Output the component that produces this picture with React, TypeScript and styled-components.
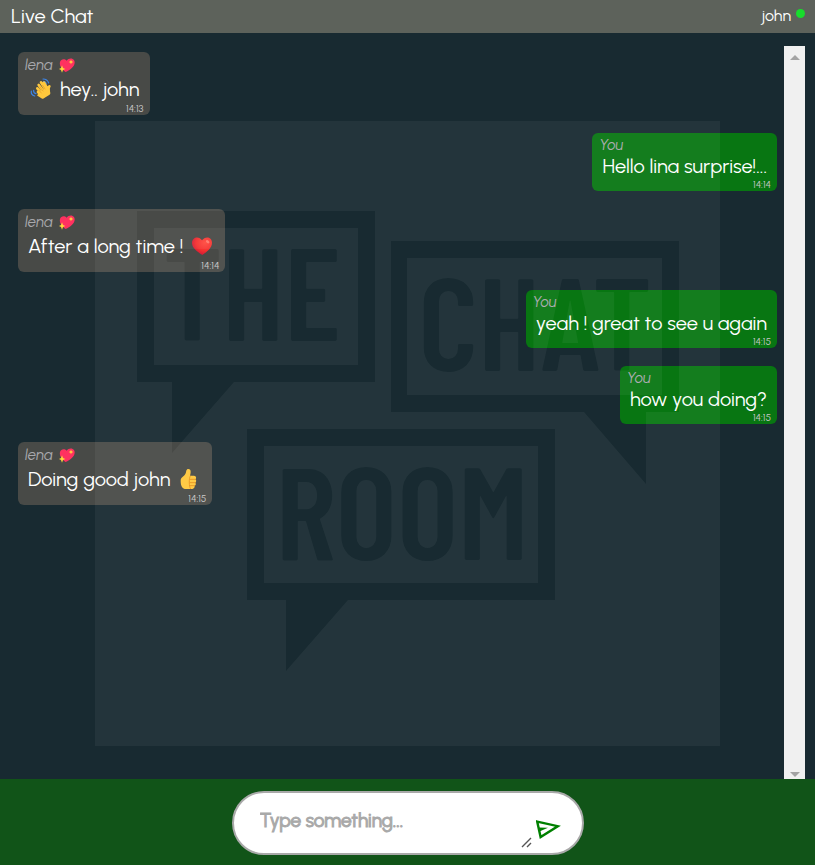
import React from "react";
import styled, { createGlobalStyle } from "styled-components";

const GlobalStyle = createGlobalStyle`
  *, *::before, *::after { box-sizing: border-box; }
  body {
    margin: 0;
    background: #182a31;
    color: #fff;
    font-family: Urbanist, Lato, "Liberation Sans", sans-serif;
  }
  button, textarea { font: inherit; }
`;

const Page = styled.div`
  position: relative;
  display: flex;
  flex-direction: column;
  height: 100vh;
  overflow: hidden;
`;

const Header = styled.header`
  display: flex;
  align-items: flex-start;
  justify-content: space-between;
  flex: none;
  padding: 4px 10px 5px 11px;
  background: #5d625b;
`;

const Title = styled.h1`
  margin: 0;
  font-size: 20px;
  line-height: 24px;
  font-weight: 400;
`;

const User = styled.div`
  display: flex;
  align-items: flex-start;
  gap: 5px;
  font-size: 16px;
  line-height: 24px;
`;

const OnlineDot = styled.span`
  width: 9px;
  height: 9px;
  margin-top: 5px;
  border-radius: 50%;
  background: #18dc2c;
`;

const Body = styled.main`
  display: flex;
  flex: 1;
  min-height: 0;
  padding: 13px 10px 0 0;
`;

const MessageList = styled.ol`
  display: flex;
  flex: 1;
  flex-direction: column;
  gap: 18px;
  margin: 0;
  padding: 6px 7px 6px 18px;
  list-style: none;
  overflow-y: auto;
  scrollbar-width: none;
`;

const Bubble = styled.li<{ $own: boolean }>`
  display: flex;
  flex: none;
  flex-direction: column;
  align-self: ${(p) => (p.$own ? "flex-end" : "flex-start")};
  max-width: 80%;
  padding: 3px 6px 1px 7px;
  border-radius: 6px;
  background: ${(p) => (p.$own ? "#087612" : "#484a47")};
`;

const Sender = styled.span<{ $own: boolean }>`
  display: flex;
  align-items: center;
  gap: 6px;
  color: #a9a9ad;
  font-size: 15px;
  line-height: ${(p) => (p.$own ? "18px" : "20px")};
  font-style: italic;
`;

const Text = styled.p<{ $own: boolean }>`
  display: flex;
  align-items: center;
  gap: 8px;
  margin: 0;
  padding: 0 4px 0 3px;
  font-size: 20px;
  line-height: ${(p) => (p.$own ? "25px" : "28px")};
`;

const Time = styled.time`
  align-self: flex-end;
  color: #c8c8c8;
  font-size: 10px;
  line-height: 11px;
`;

const ScrollTrack = styled.div`
  display: flex;
  flex: none;
  flex-direction: column;
  align-items: center;
  justify-content: space-between;
  width: 21px;
  padding: 9px 0 2px;
  background: #f0f0f0;
`;

const Watermark = styled.div`
  position: absolute;
  inset: 0;
  display: flex;
  align-items: center;
  justify-content: center;
  padding-top: 1px;
  pointer-events: none;
`;

const Footer = styled.footer`
  display: flex;
  flex: none;
  justify-content: center;
  padding: 12px 0 10px;
  background: #115418;
`;

const Composer = styled.form`
  display: flex;
  width: 352px;
  max-width: 90%;
  height: 64px;
  padding: 0 17px 0 26px;
  border: 2px solid #a9a9a9;
  border-radius: 32px;
  background: #fff;
`;

const Input = styled.textarea`
  flex: 1;
  min-width: 0;
  height: 60px;
  padding: 16px 0;
  border: 0;
  outline: 0;
  resize: none;
  background: transparent;
  color: #222;
  font-size: 19px;
  line-height: 24px;
  &::placeholder {
    color: #a9a9a9;
    opacity: 1;
    -webkit-text-stroke: 1px #a9a9a9;
  }
`;

const Grip = styled.svg`
  align-self: flex-end;
  flex: none;
  margin-bottom: 4px;
`;

const SendButton = styled.button`
  display: flex;
  align-items: center;
  flex: none;
  padding: 14px 3px 0;
  border: 0;
  background: none;
  cursor: pointer;
`;

const EmojiSvg = styled.svg`
  display: block;
  flex: none;
`;

const LogoWord = styled.text`
  font-family: "Barlow Condensed", "Bebas Neue", Oswald, "Liberation Sans Narrow", "Roboto Condensed", sans-serif;
  font-weight: 600;
  text-anchor: middle;
`;

function SparklingHeart() {
  return (
    <EmojiSvg width="16" height="15" viewBox="0 0 48 45" role="img" aria-label="sparkling heart">
      <path d="M20 42C10 35 0 25 3 12C6 3 16 1 23 8C28 0 40-1 45 6C53 20 36 36 20 42Z" fill="#ff3160" />
      <path d="M9 22L12 30L19 33L12 36L9 44L6 36L0 33L6 30Z" fill="#ffd83b" />
      <path d="M36 5L38 10L43 12L38 14L36 19L34 14L29 12L34 10Z" fill="#ffd83b" />
    </EmojiSvg>
  );
}

function WavingHand() {
  return (
    <EmojiSvg width="24" height="22" viewBox="0 0 72 66" role="img" aria-label="waving hand">
      <path d="M10 39Q8 50 20 54M17 37Q16 45 24 47M45 3Q58 3 62 15M47 10Q54 11 55 18" fill="none" stroke="#3d86ea" strokeWidth="3.5" strokeLinecap="round" />
      <path d="M30 48L44 57L62 46L59 27" fill="#ffc83d" stroke="#ffc83d" strokeWidth="10" strokeLinejoin="round" />
      <path d="M32 21L47 41M39 13L53 35M48 14L59 34M28 31L42 47M30 42L40 52M64 25Q58 32 62 43" fill="none" stroke="#ffc83d" strokeWidth="8" strokeLinecap="round" />
      <path d="M36 27L45 39M44 22L51 33M33 37L40 45" stroke="#e79a22" strokeWidth="2" strokeLinecap="round" />
    </EmojiSvg>
  );
}

function RedHeart() {
  return (
    <EmojiSvg width="24" height="20" viewBox="0 0 72 60" role="img" aria-label="red heart">
      <defs>
        <radialGradient id="heart-fill" cx="0.65" cy="0.3" r="0.75">
          <stop offset="0" stopColor="#ff4b40" />
          <stop offset="0.6" stopColor="#f5302f" />
          <stop offset="1" stopColor="#c81738" />
        </radialGradient>
      </defs>
      <path d="M34 57C18 46 3 36 3 21C3 2 25-1 33 13C42-1 63 2 63 20C63 36 48 47 34 57Z" fill="url(#heart-fill)" />
      <ellipse cx="50" cy="17" rx="6" ry="4" transform="rotate(40 50 17)" fill="#ff7a6c" />
    </EmojiSvg>
  );
}

function ThumbsUp() {
  return (
    <EmojiSvg width="24" height="22" viewBox="0 0 72 66" role="img" aria-label="thumbs up">
      <path d="M8 38C8 27 20 25 23 16C25 11 24 3 31 3C41 3 38 16 36 23H48C55 23 56 32 52 34C56 37 55 42 52 44C55 48 53 52 50 53C51 60 46 63 38 63H25C12 63 8 53 8 38Z" fill="#ffc83d" />
      <path d="M52 34H37M52 44H36M50 53H36M37 24C32 28 33 58 37 62" fill="none" stroke="#e58a16" strokeWidth="2.5" strokeLinecap="round" />
    </EmojiSvg>
  );
}

type Message = {
  own?: boolean;
  text: string;
  before?: React.ReactNode;
  after?: React.ReactNode;
  time: string;
};

const messages: Message[] = [
  { before: <WavingHand />, text: "hey.. john", time: "14:13" },
  { own: true, text: "Hello lina surprise!...", time: "14:14" },
  { text: "After a long time !", after: <RedHeart />, time: "14:14" },
  { own: true, text: "yeah ! great to see u again", time: "14:15" },
  { own: true, text: "how you doing?", time: "14:15" },
  { text: "Doing good john", after: <ThumbsUp />, time: "14:15" },
];

function RoomLogo() {
  return (
    <svg width="625" height="625" viewBox="0 0 625 625" aria-hidden="true">
      <mask id="room-cutout">
        <rect width="625" height="625" fill="#fff" />
        <g fill="#000">
          <path fillRule="evenodd" d="M42 90H280V261H139L77 332V261H42ZM59 107V244H263V107Z" />
          <path fillRule="evenodd" d="M296 120H584V291H551V363L489 291H296ZM312 137V274H567V137Z" />
          <path fillRule="evenodd" d="M152 308H460V479H253L191 550V479H152ZM169 325V462H443V325Z" />
          <LogoWord x="157" y="220" fontSize="131">THE</LogoWord>
          <LogoWord x="440" y="250" fontSize="131">CHAT</LogoWord>
          <LogoWord x="307" y="439" fontSize="131">ROOM</LogoWord>
        </g>
      </mask>
      <rect width="625" height="625" fill="#fff" fillOpacity="0.05" mask="url(#room-cutout)" />
    </svg>
  );
}

export default function App() {
  return (
    <Page>
      <GlobalStyle />
      <Header>
        <Title>Live Chat</Title>
        <User>john <OnlineDot /></User>
      </Header>
      <Body>
        <MessageList>
          {messages.map((m, i) => (
            <Bubble key={i} $own={!!m.own}>
              <Sender $own={!!m.own}>{m.own ? "You" : <>lena <SparklingHeart /></>}</Sender>
              <Text $own={!!m.own}>
                {m.before}
                {m.text}
                {m.after}
              </Text>
              <Time>{m.time}</Time>
            </Bubble>
          ))}
        </MessageList>
        <ScrollTrack aria-hidden="true">
          <svg width="10" height="5" viewBox="0 0 10 5"><path d="M0 5L5 0L10 5Z" fill="#a3a3a3" /></svg>
          <svg width="10" height="5" viewBox="0 0 10 5"><path d="M0 0L5 5L10 0Z" fill="#a3a3a3" /></svg>
        </ScrollTrack>
      </Body>
      <Footer>
        <Composer onSubmit={(e) => e.preventDefault()}>
          <Input aria-label="Message" placeholder="Type something..." />
          <Grip width="12" height="12" viewBox="0 0 12 12" aria-hidden="true">
            <path d="M1 10L10 1M6 10L10 6" stroke="#555" strokeWidth="1.4" />
          </Grip>
          <SendButton type="submit" aria-label="Send">
            <svg width="26" height="22" viewBox="0 0 26 22">
              <path d="M1.2 2.6L21.8 7.2L4.6 18Z" fill="none" stroke="#008000" strokeWidth="2.4" />
              <path d="M2 8.5L12 8.8L3.4 12.4Z" fill="#008000" />
            </svg>
          </SendButton>
        </Composer>
      </Footer>
      <Watermark><RoomLogo /></Watermark>
    </Page>
  );
}
